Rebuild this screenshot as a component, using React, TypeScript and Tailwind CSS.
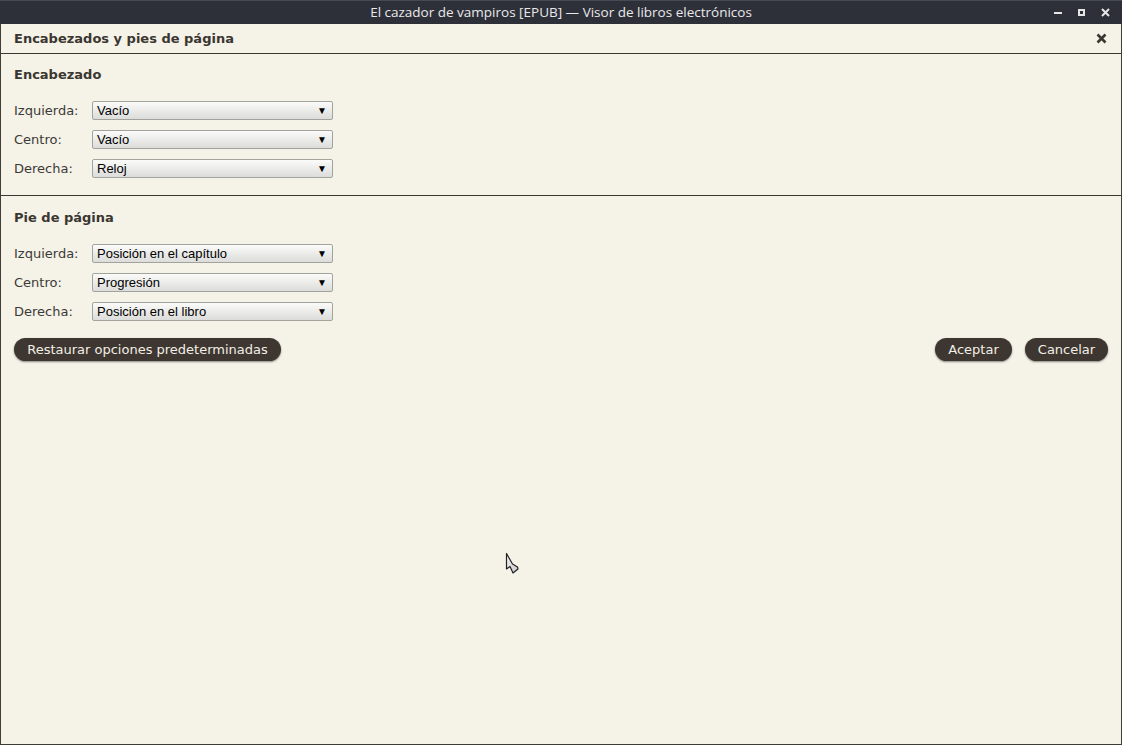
import React from 'react'

const sans = { fontFamily: '"DejaVu Sans", sans-serif' }

function Select({ value }: { value: string }) {
  return (
    <div
      className="w-[241px] h-[19px] flex items-center justify-between pl-[4px] pr-[5px] rounded-[2px] border border-[#a3a39d] bg-gradient-to-b from-[#fbfbfa] to-[#dcdcda] text-[13px] text-black"
      style={{ fontFamily: '"Liberation Sans", Arial, sans-serif' }}
    >
      <span className="leading-none">{value}</span>
      <span className="text-[10px] leading-none">▼</span>
    </div>
  )
}

function Row({ label, value }: { label: string; value: string }) {
  return (
    <div className="h-[19px] flex items-center">
      <span className="w-[78px] text-[13px] leading-[19px] text-[#3c3a36]">{label}</span>
      <Select value={value} />
    </div>
  )
}

function PillButton({ children, className = '' }: { children: React.ReactNode; className?: string }) {
  return (
    <button
      className={`h-[23px] rounded-full bg-[#3e3631] text-[#f2efe6] text-[13px] shadow-[0_1px_2px_rgba(0,0,0,0.45)] ${className}`}
      style={sans}
    >
      {children}
    </button>
  )
}

export default function App() {
  return (
    <div className="relative w-[1122px] h-[745px] flex flex-col bg-[#f5f2e8] overflow-hidden" style={sans}>
      {/* Title bar */}
      <div className="h-[24px] shrink-0 relative flex items-center justify-center bg-[#2e3039] border-t border-[#464a54]">
        <span className="text-[13.5px] text-[#e9e9ea]" style={{ fontFamily: '"Open Sans", "DejaVu Sans", sans-serif' }}>
          El cazador de vampiros [EPUB] — Visor de libros electrónicos
        </span>
        <div className="absolute right-[12px] top-0 h-full flex items-center gap-[16px]">
          <div className="w-[8px] h-[2px] bg-[#e6e6e6]" />
          <div className="w-[7px] h-[7px] border-2 border-[#e6e6e6]" />
          <svg width="9" height="9" viewBox="0 0 9 9">
            <path d="M1 1 L8 8 M8 1 L1 8" stroke="#e6e6e6" strokeWidth="2" />
          </svg>
        </div>
      </div>

      {/* Dialog */}
      <div className="flex-1 flex flex-col border-l border-r border-b border-[#3f3d36]">
        <div className="h-[30px] shrink-0 flex items-center justify-between pl-[13px] pr-[14px] border-b border-[#3a3832]">
          <span className="text-[13px] font-bold text-[#3a3630]">Encabezados y pies de página</span>
          <svg width="11" height="11" viewBox="0 0 11 11">
            <path d="M1.5 1.5 L9.5 9.5 M9.5 1.5 L1.5 9.5" stroke="#3a3630" strokeWidth="2.6" />
          </svg>
        </div>

        <div className="pl-[13px] pt-[12px] pb-[17px] border-b border-[#3a3832]">
          <div className="h-[17px] leading-[17px] text-[13px] font-bold text-[#3a3630]">Encabezado</div>
          <div className="mt-[18px] flex flex-col gap-[10px]">
            <Row label="Izquierda:" value="Vacío" />
            <Row label="Centro:" value="Vacío" />
            <Row label="Derecha:" value="Reloj" />
          </div>
        </div>

        <div className="pl-[13px] pr-[13px] pt-[13px]">
          <div className="h-[17px] leading-[17px] text-[13px] font-bold text-[#3a3630]">Pie de página</div>
          <div className="mt-[18px] flex flex-col gap-[10px]">
            <Row label="Izquierda:" value="Posición en el capítulo" />
            <Row label="Centro:" value="Progresión" />
            <Row label="Derecha:" value="Posición en el libro" />
          </div>
          <div className="mt-[17px] flex items-center justify-between">
            <PillButton className="w-[267px]">Restaurar opciones predeterminadas</PillButton>
            <div className="flex gap-[13px]">
              <PillButton className="w-[77px]">Aceptar</PillButton>
              <PillButton className="w-[83px]">Cancelar</PillButton>
            </div>
          </div>
        </div>
      </div>

      {/* Mouse pointer */}
      <svg className="absolute left-[505px] top-[552px]" width="16" height="24" viewBox="0 0 16 24">
        <defs>
          <linearGradient id="cur" x1="0" y1="0" x2="1" y2="1">
            <stop offset="0" stopColor="#f4f4f4" />
            <stop offset="1" stopColor="#c8c8c8" />
          </linearGradient>
        </defs>
        <path d="M1.5 1.5 L1.5 17 L5 14.5 L8 21 L13 17 L12.5 15 L7.5 12 Z" fill="url(#cur)" stroke="#222" strokeWidth="1.2" strokeLinejoin="round" />
      </svg>
    </div>
  )
}
